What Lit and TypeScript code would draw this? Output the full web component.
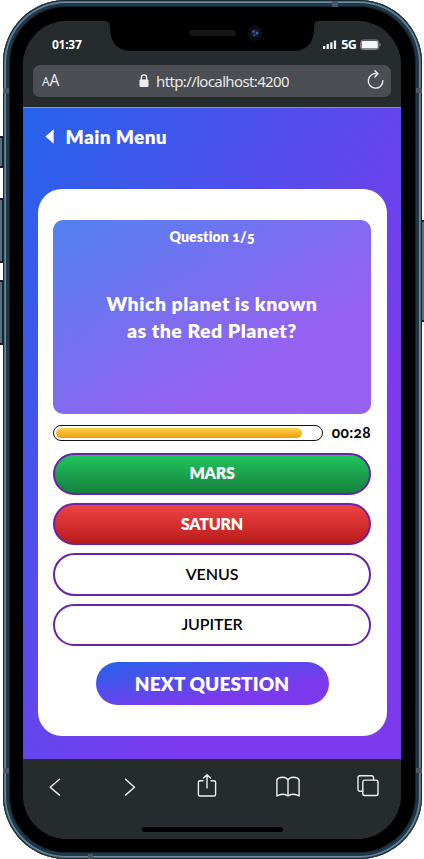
import { LitElement, html, css, svg } from "lit";
import { customElement, property } from "lit/decorators.js";
import { classMap } from "lit/directives/class-map.js";
import { styleMap } from "lit/directives/style-map.js";

@customElement("status-header")
class StatusHeader extends LitElement {
  static styles = css`
    :host { display: flex; flex-direction: column; height: 87px; box-sizing: border-box; background: #262b2e; border-bottom: 1px solid #8f8ec4; color: #fff; font-family: "Noto Sans", "Open Sans", sans-serif; }
    .status { display: flex; justify-content: space-between; align-items: center; height: 44px; padding: 3px 20px 0 29px; box-sizing: border-box; }
    .time { font-size: 12px; font-weight: 700; line-height: 16px; letter-spacing: -0.25px; }
    .signals { display: flex; align-items: center; font-size: 12.5px; font-weight: 700; line-height: 16px; letter-spacing: -0.7px; }
    .bars { margin-right: 4px; }
    .battery { margin-left: 4px; }
    .url { display: flex; align-items: center; height: 32px; margin: 0 10px; padding: 0 7px 0 9px; box-sizing: border-box; border-radius: 7px; background: #4b4e53; color: #e8e8e9; }
    .aa { width: 40px; font-size: 15.5px; line-height: 34px; letter-spacing: -0.3px; }
    .aa small { font-size: 12px; }
    .address { flex: 1; display: flex; align-items: center; justify-content: center; font-size: 15px; letter-spacing: -0.64px; line-height: 32px; padding-left: 2px; }
    .address svg { margin-right: 7px; }
    .reload { width: 40px; display: flex; justify-content: flex-end; padding-bottom: 2px; }
    svg { display: block; }
  `;
  render() {
    return html`
      <div class="status">
        <span class="time">01:37</span>
        <div class="signals">
          <svg class="bars" width="14" height="10" fill="#eee"><rect x="0" y="6" width="2.3" height="3"/><rect x="3.6" y="4" width="2.3" height="5"/><rect x="7.2" y="2.3" width="2.3" height="6.7"/><rect x="10.8" y="0.5" width="2.3" height="8.5"/></svg>
          <span>5G</span>
          <svg class="battery" width="21" height="12"><rect x=".7" y="1" width="18" height="9.6" rx="2.5" fill="none" stroke="#85888a"/><rect x="1.6" y="2" width="16.2" height="7.6" rx="1.4" fill="#f4f4f4"/><path d="M20 4.3v3" stroke="#85888a"/></svg>
        </div>
      </div>
      <div class="url">
        <span class="aa"><small>A</small>A</span>
        <div class="address">
          <svg width="10" height="14"><rect x=".5" y="5.5" width="9" height="7.5" rx="1" fill="#eee"/><path d="M2.4 6V3.5a2.6 2.6 0 0 1 5.2 0V6" fill="none" stroke="#eee" stroke-width="1.4"/></svg>
          <span>http://localhost:4200</span>
        </div>
        <div class="reload">
          <svg width="17" height="20" fill="none" stroke="#eee" stroke-width="1.4" stroke-linecap="round" stroke-linejoin="round"><path d="M15.9 10.8A7.3 7.3 0 1 1 10 3.7"/><path d="M7.9 .8 11 3.7 7.9 6.9"/></svg>
        </div>
      </div>`;
  }
}

@customElement("browser-toolbar")
class BrowserToolbar extends LitElement {
  static styles = css`
    :host { display: flex; flex-direction: column; align-items: center; height: 80px; background: #262b2e; }
    .icons { display: grid; grid-template-columns: 64px 85px 69px 94px 66px; justify-items: center; align-items: center; align-self: stretch; height: 56px; }
    svg { display: block; fill: none; stroke: #f0f0f0; stroke-width: 1.4; stroke-linecap: round; stroke-linejoin: round; }
    .home { width: 141px; height: 5px; margin-top: 12px; border-radius: 3px; background: #000; }
  `;
  render() {
    const icons = [
      { w: 12, h: 18, d: svg`<path d="M10.5 1.3 1.2 9.3l9.3 7.8"/>` },
      { w: 12, h: 18, d: svg`<path d="M1.5 1.3 10.5 9.3l-9 7.8"/>` },
      { w: 20, h: 26, d: svg`<path d="M6 6.7H3a1.6 1.6 0 0 0-1.6 1.6v12.1A1.6 1.6 0 0 0 3 22h14a1.6 1.6 0 0 0 1.6-1.6V8.3A1.6 1.6 0 0 0 17 6.7h-3M10 14V0.8M6.5 4.1 10 .8l3.5 3.3"/>` },
      { w: 24, h: 22, d: svg`<path d="M12 20V3.8C10.8 2 9 1.2 6.6 1.2 4.2 1.2 2 2 .9 3.6V20C2.5 18.9 4.3 18.2 6.6 18.2s4.2.6 5.4 1.8c1.2-1.2 3.1-1.8 5.4-1.8s4.1.7 5.7 1.8V3.6C22 2 19.8 1.2 17.4 1.2c-2.4 0-4.2.8-5.4 2.6"/>` },
      { w: 22, h: 24, d: svg`<path d="M5.8 16.3H2.7A1.7 1.7 0 0 1 1 14.6V2.4A1.7 1.7 0 0 1 2.7 .7h12.1a1.7 1.7 0 0 1 1.7 1.7v2.7"/><rect x="5.8" y="5.1" width="15.2" height="15.4" rx="1.8"/>` },
    ];
    return html`
      <div class="icons">${icons.map((i) => html`<svg width=${i.w} height=${i.h}>${i.d}</svg>`)}</div>
      <div class="home"></div>`;
  }
}

@customElement("quiz-screen")
class QuizScreen extends LitElement {
  @property({ type: Number }) progress = 93.2;

  static styles = css`
    :host { display: flex; flex-direction: column; flex: 1; background: linear-gradient(to bottom right, #2563eb, #7c3aed 70%); font-family: Lato, "Open Sans", sans-serif; font-variant-numeric: oldstyle-nums; padding: 0 14.5px; }
    .back { display: flex; align-items: center; height: 58px; padding-left: 7px; color: #fff; font-size: 19px; font-weight: 800; line-height: 24px; }
    .back svg { margin-right: 12px; }
    .back span { letter-spacing: 0.4px; }
    .card { display: flex; flex-direction: column; align-items: stretch; height: 547px; margin-top: 22.8px; padding: 31.5px 15.5px 0; box-sizing: border-box; border-radius: 24px; background: #fff; }
    .question { display: flex; flex-direction: column; height: 193.5px; flex: none; border-radius: 10px; color: #fff; text-align: center; background: linear-gradient(to bottom right, #5182ef, #9661f1 70%); }
    .count { padding-top: 7px; font-size: 14px; font-weight: 800; line-height: 20px; letter-spacing: 0.15px; }
    .prompt { margin-top: 42.5px; font-size: 19.5px; font-weight: 800; line-height: 27px; letter-spacing: 0.5px; }
    .timer { display: flex; align-items: center; justify-content: space-between; height: 16px; margin-top: 11.5px; }
    .track { width: 270px; height: 16px; padding: 2px; box-sizing: border-box; border: 1px solid #111; border-radius: 8px; }
    .fill { height: 10px; border-radius: 5px; background: linear-gradient(#fcd34d, #f59e0b); }
    .left { font-size: 15.5px; font-weight: 700; line-height: 14px; padding-bottom: 2px; letter-spacing: 0.35px; color: #000; }
    .answers { display: flex; flex-direction: column; gap: 8px; margin-top: 11.5px; }
    .answer { display: flex; align-items: center; justify-content: center; height: 42.3px; padding-bottom: 2px; box-sizing: border-box; border: 2px solid #6b21a8; border-radius: 22px; color: #000; font-size: 16px; font-weight: 600; letter-spacing: -0.1px; }
    .right, .wrong { color: #fff; font-weight: 800; letter-spacing: -0.25px; }
    .right { background: linear-gradient(#22c55e, #15803d); }
    .wrong { background: linear-gradient(#ef4444, #b91c1c); }
    .next { display: flex; align-items: center; justify-content: center; align-self: center; width: 233px; height: 43px; margin-top: 15.6px; border-radius: 22px; color: #fff; font-size: 19px; font-weight: 800; letter-spacing: 0.1px; background: linear-gradient(to bottom right, #2563eb, #7c3aed 70%); }
  `;
  render() {
    const answers = [
      { text: "MARS", state: "right" },
      { text: "SATURN", state: "wrong" },
      { text: "VENUS", state: "" },
      { text: "JUPITER", state: "" },
    ];
    return html`
      <div class="back">
        <svg width="9" height="16"><path d="M8.7 .2v14.6L.5 7.5z" fill="#fff"/></svg>
        <span>Main Menu</span>
      </div>
      <div class="card">
        <div class="question">
          <div class="count">Question 1/5</div>
          <div class="prompt">Which planet is known<br />as the Red Planet?</div>
        </div>
        <div class="timer">
          <div class="track"><div class="fill" style=${styleMap({ width: `${this.progress}%` })}></div></div>
          <span class="left">00:28</span>
        </div>
        <div class="answers">
          ${answers.map((a) => html`<div class=${classMap({ answer: true, right: a.state === "right", wrong: a.state === "wrong" })}>${a.text}</div>`)}
        </div>
        <div class="next">NEXT QUESTION</div>
      </div>`;
  }
}

@customElement("app-root")
class AppRoot extends LitElement {
  static styles = css`
    :host { display: block; position: relative; width: 424px; height: 859px; overflow: hidden; background: #fff; }
    .phone { position: relative; display: flex; width: 419px; height: 859px; margin-left: 3px; padding: 21px 21px 20px 20px; box-sizing: border-box; border-radius: 63px; background: #000; box-shadow: inset 0 0 0 1px #1d2930, inset 0 0 0 2px #507086, inset 0 0 0 3px #6c8ea3, inset 0 0 0 6px #213746, inset 0 0 0 7px #13212a; }
    .screen { display: flex; flex-direction: column; flex: 1; overflow: hidden; border-radius: 44px; background: #262b2e; }
    .notch { position: absolute; left: 100px; top: 20px; }
    .side { position: absolute; width: 4px; box-sizing: border-box; border: 1px solid #14212a; border-width: 2px 1px; background: #557082; }
    .mute { left: -1px; top: 136px; height: 32px; }
    .up { left: -1px; top: 198px; height: 65px; }
    .down { left: -1px; top: 280px; height: 65px; }
    .power { left: 421px; top: 220px; height: 102px; }
    .band { position: absolute; background: #4a5861; }
    .b1 { left: 332px; top: 1px; width: 6px; height: 6px; }
    .b2 { left: 3px; top: 88px; width: 6px; height: 5px; }
    .b3 { left: 416px; top: 88px; width: 6px; height: 5px; }
    .b4 { left: 3px; top: 768px; width: 6px; height: 5px; }
    .b5 { left: 416px; top: 768px; width: 6px; height: 5px; }
    .b6 { left: 88px; top: 854px; width: 5px; height: 5px; }
  `;
  render() {
    return html`
      <div class="side mute"></div><div class="side up"></div><div class="side down"></div><div class="side power"></div>
      <div class="phone">
        <div class="screen">
          <status-header></status-header>
          <quiz-screen></quiz-screen>
          <browser-toolbar></browser-toolbar>
        </div>
        <svg class="notch" width="220" height="32">
          <path d="M0 0H220V1H216Q211 1 211 7V11Q209 31 190 31H27Q9 30 7 11V7Q7 1 2 1H0Z" fill="#000"/>
          <rect x="86" y="10" width="47" height="6" rx="3" fill="#151515"/>
          <circle cx="152" cy="13" r="7.7" fill="#0b0c0e"/>
          <circle cx="152" cy="13" r="4" fill="#141f40"/>
          <circle cx="150.6" cy="11.6" r="1.4" fill="#514b98"/>
          <circle cx="154" cy="13" r="1.2" fill="#2e70b8"/>
          <circle cx="151.4" cy="15" r="1.1" fill="#315e93"/>
        </svg>
      </div>
      <div class="band b1"></div><div class="band b2"></div><div class="band b3"></div><div class="band b4"></div><div class="band b5"></div><div class="band b6"></div>`;
  }
}
